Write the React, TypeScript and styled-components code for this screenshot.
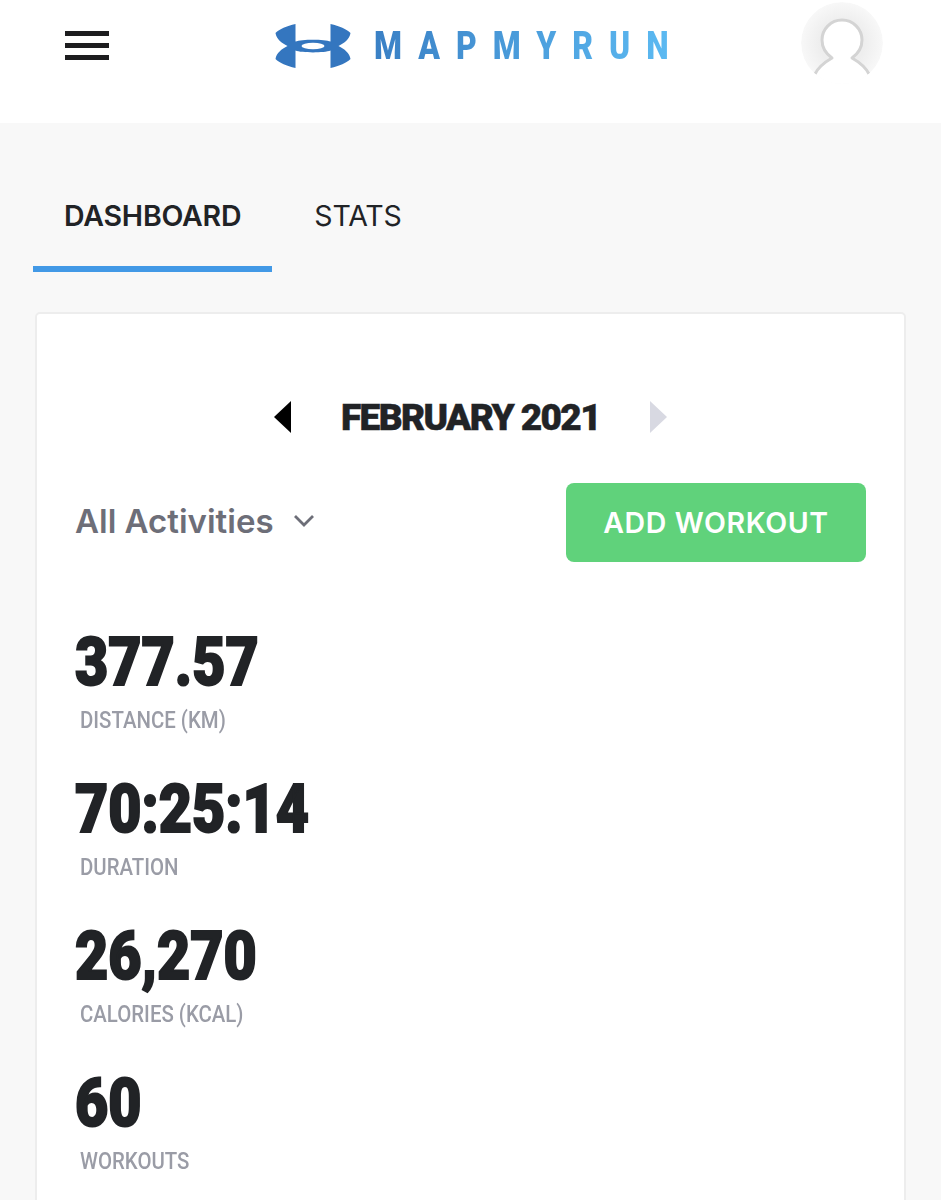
import styled, { createGlobalStyle } from 'styled-components';

const stats = [
  { value: '377.57', label: 'DISTANCE (KM)' },
  { value: '70:25:14', label: 'DURATION' },
  { value: '26,270', label: 'CALORIES (KCAL)' },
  { value: '60', label: 'WORKOUTS' },
];

export default function App() {
  return (
    <>
      <GlobalStyle />
      <Page>
        <Header>
          <MenuButton aria-label="Menu">
            <span />
            <span />
            <span />
          </MenuButton>
          <Logo>
            <svg width="76" height="44" viewBox="0 0 75 44">
              <path
                fill="#3476bf"
                d="M20 0 C11 2 4 5 0 9 C1 15 6 19 12 22 C6 25 1 29 0 35 C4 39 11 42 20 44 L20 26.5 C26 29 49 29 55 26.5 L55 44 C64 42 71 39 75 35 C74 29 69 25 63 22 C69 19 74 15 75 9 C71 5 64 2 55 0 L55 17.5 C49 15 26 15 20 17.5 Z"
              />
              <ellipse cx="37.5" cy="22" rx="11.5" ry="3.3" fill="#fff" />
            </svg>
            <LogoText>MAPMYRUN</LogoText>
          </Logo>
          <Avatar>
            <svg width="82" height="82" viewBox="0 0 82 82">
              <defs>
                <radialGradient id="avatarFill" cx="50%" cy="50%" r="50%">
                  <stop offset="55%" stopColor="#eeeeee" />
                  <stop offset="100%" stopColor="#f8f8f8" />
                </radialGradient>
                <filter id="avatarSoft">
                  <feGaussianBlur stdDeviation="0.6" />
                </filter>
              </defs>
              <circle cx="41" cy="41" r="41" fill="url(#avatarFill)" />
              <path
                fill="#fff"
                d="M14 72 C18 64 24 60 31 56 C24 51 21 45 21 38 C21 27 30 18 41 18 C52 18 61 27 61 38 C61 45 58 51 51 56 C58 60 64 64 68 72 L68 82 L14 82 Z"
              />
              <path
                fill="none"
                stroke="#d4d4d4"
                strokeWidth="3"
                strokeLinejoin="round"
                filter="url(#avatarSoft)"
                d="M14 72 C18 64 24 60 31 56 C24 51 21 45 21 38 C21 27 30 18 41 18 C52 18 61 27 61 38 C61 45 58 51 51 56 C58 60 64 64 68 72"
              />
            </svg>
          </Avatar>
        </Header>
        <Main>
          <Tabs>
            <Tab $active>DASHBOARD</Tab>
            <Tab>STATS</Tab>
          </Tabs>
          <Card>
            <MonthRow>
              <MonthArrow $dir="left" />
              <MonthTitle>FEBRUARY 2021</MonthTitle>
              <MonthArrow $dir="right" $disabled />
            </MonthRow>
            <FilterRow>
              <ActivitySelect>
                All Activities
                <svg width="22" height="14" viewBox="0 0 22 14">
                  <path d="M2 2 L11 11 L20 2" fill="none" stroke="#6d6e78" strokeWidth="2.8" />
                </svg>
              </ActivitySelect>
              <AddButton>ADD WORKOUT</AddButton>
            </FilterRow>
            <StatList>
              {stats.map(({ value, label }) => (
                <li key={label}>
                  <StatValue>{value}</StatValue>
                  <StatLabel>{label}</StatLabel>
                </li>
              ))}
            </StatList>
          </Card>
        </Main>
      </Page>
    </>
  );
}

const GlobalStyle = createGlobalStyle`
  body {
    margin: 0;
    background: #f8f8f8;
    font-family: Inter, "Liberation Sans", sans-serif;
  }
`;

const Page = styled.div`
  height: 1200px;
  overflow: hidden;
`;

const Header = styled.header`
  height: 123px;
  background: #fff;
  display: flex;
  align-items: flex-start;
  padding: 3px 58px 0 65px;
  box-sizing: border-box;
`;

const MenuButton = styled.button`
  width: 44px;
  margin-top: 28px;
  padding: 0;
  border: none;
  background: none;
  display: flex;
  flex-direction: column;
  gap: 7px;

  span {
    height: 5px;
    background: #1d1d1f;
  }
`;

const Logo = styled.div`
  margin: 21px 0 0 166px;
  display: flex;
  align-items: center;
  gap: 23px;
`;

const LogoText = styled.span`
  font-family: Roboto, "Liberation Sans", sans-serif;
  font-size: 38px;
  font-weight: 900;
  line-height: 44px;
  letter-spacing: 19px;
  width: 354px;
  white-space: nowrap;
  background: linear-gradient(90deg, #3a80c5, #5cbaf2);
  background-clip: text;
  -webkit-background-clip: text;
  color: transparent;
  transform: scaleX(0.84);
  transform-origin: left;
`;

const Avatar = styled.div`
  width: 82px;
  height: 82px;
  border-radius: 50%;
  overflow: hidden;
  margin: -1px 0 0 auto;
`;

const Main = styled.main`
  padding: 0 35px;
`;

const Tabs = styled.nav`
  display: flex;
  margin: 0 0 40px -2px;
`;

const Tab = styled.div<{ $active?: boolean }>`
  height: 149px;
  box-sizing: border-box;
  padding: 42px 31px 0;
  display: flex;
  align-items: center;
  font-size: 28.5px;
  letter-spacing: -0.2px;
  font-weight: ${(p) => (p.$active ? 600 : 400)};
  color: #212326;
  border-bottom: 6px solid ${(p) => (p.$active ? '#4299e6' : 'transparent')};
  margin-right: 11px;
`;

const Card = styled.section`
  background: #fff;
  border: 2px solid #ededed;
  border-radius: 5px;
  padding: 0 38px;
  height: 1000px;
`;

const MonthRow = styled.div`
  display: flex;
  align-items: center;
  justify-content: center;
  gap: 50px;
  height: 70px;
  margin-top: 68px;
`;

const MonthArrow = styled.span<{ $dir: 'left' | 'right'; $disabled?: boolean }>`
  width: 0;
  height: 0;
  border-top: 16px solid transparent;
  border-bottom: 16px solid transparent;
  border-${(p) => (p.$dir === 'left' ? 'right' : 'left')}: 17px solid
    ${(p) => (p.$disabled ? '#d8d9e2' : '#000')};
`;

const MonthTitle = styled.h2`
  margin: 0;
  font-family: Roboto, "Liberation Sans", sans-serif;
  font-size: 37px;
  font-weight: 900;
  color: #212326;
  letter-spacing: -1.6px;
  -webkit-text-stroke: 0.5px #212326;
`;

const FilterRow = styled.div`
  display: flex;
  justify-content: space-between;
  align-items: center;
  margin-top: 31px;
`;

const ActivitySelect = styled.div`
  display: flex;
  align-items: center;
  gap: 19px;
  margin-top: -4px;
  font-size: 33px;
  font-weight: 600;
  color: #6d6e78;
`;

const AddButton = styled.button`
  width: 300px;
  height: 79px;
  border: none;
  border-radius: 8px;
  background: #60d27b;
  color: #fff;
  font-family: Inter, "Liberation Sans", sans-serif;
  font-size: 28.5px;
  font-weight: 600;
  letter-spacing: 0.6px;
`;

const StatList = styled.ul`
  list-style: none;
  margin: 66px 0 0;
  padding: 0;
  display: flex;
  flex-direction: column;
  gap: 41px;
`;

const StatValue = styled.div`
  font-family: Roboto, "Liberation Sans", sans-serif;
  font-size: 67.5px;
  font-weight: 900;
  line-height: 68px;
  color: #212326;
  -webkit-text-stroke: 2px #212326;
  transform: scaleX(0.85);
  transform-origin: left;
`;

const StatLabel = styled.div`
  font-family: Roboto, "Liberation Sans", sans-serif;
  font-size: 24px;
  font-weight: 500;
  line-height: 28px;
  color: #9a9ca6;
  margin: 10px 0 0 5px;
  transform: scaleX(0.85);
  transform-origin: left;
`;
